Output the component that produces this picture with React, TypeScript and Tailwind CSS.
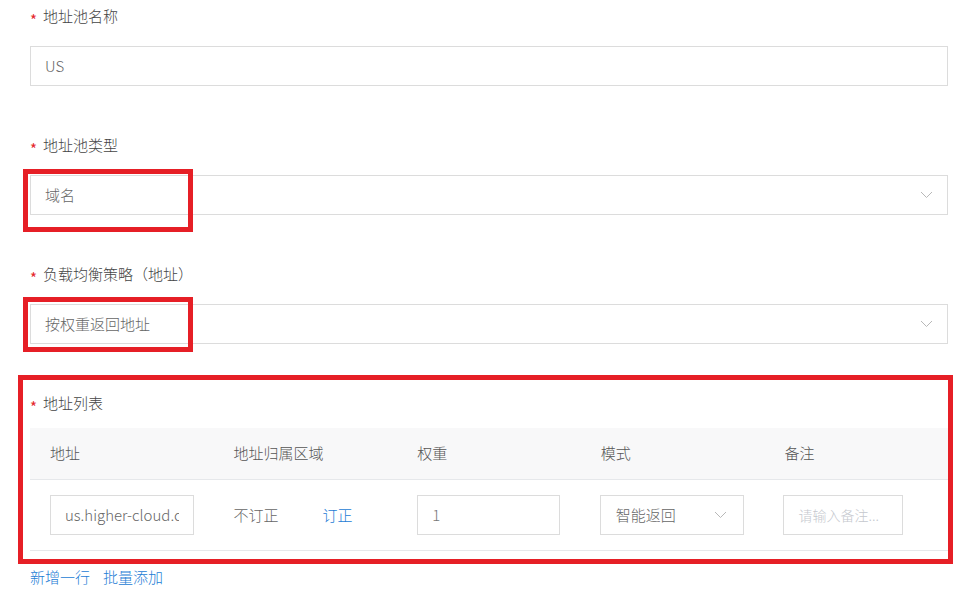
import React from "react"

const font = { fontFamily: '"Microsoft YaHei", "Noto Sans CJK SC", sans-serif' }

function Chevron({ className = "" }: { className?: string }) {
  return (
    <svg width="13" height="8" viewBox="0 0 13 8" className={className}>
      <path d="M1 1l5.5 5.5L12 1" fill="none" stroke="#b8b8b8" strokeWidth="1" />
    </svg>
  )
}

function Label({ children }: { children: React.ReactNode }) {
  return (
    <div className="flex h-5 items-center text-[15px] font-light leading-5 text-[#444]">
      <span className="mr-[6px] mt-[7px] text-[15px] font-normal leading-none text-[#e4262b]">*</span>
      {children}
    </div>
  )
}

function Field({ label, value, select }: { label: string; value: string; select?: boolean }) {
  return (
    <div className="flex flex-col">
      <Label>{label}</Label>
      <div className="mt-5 flex h-10 items-center justify-between border border-[#dcdcdc] bg-white pl-[14px] pr-[14px] text-[15px] font-light text-[#666]">
        <span>{value}</span>
        {select && <Chevron />}
      </div>
    </div>
  )
}

export default function App() {
  const cols = ["地址", "地址归属区域", "权重", "模式", "备注"]
  return (
    <div className="relative h-[603px] w-[971px] overflow-hidden bg-white" style={font}>
      <div className="flex flex-col pl-[30px] pr-[23px] pt-[6px]">
        <Field label="地址池名称" value="US" />
        <div className="mt-[49px]">
          <Field label="地址池类型" value="域名" select />
        </div>
        <div className="mt-[49px]">
          <Field label="负载均衡策略（地址）" value="按权重返回地址" select />
        </div>
        <div className="mt-[49px]">
          <Label>地址列表</Label>
        </div>
        <div className="mt-[15px] grid h-[52px] grid-cols-5 items-center border-b border-[#e6e8eb] bg-[#f8f8f9] text-[15px] font-light text-[#555]">
          {cols.map((c) => (
            <div key={c} className="pl-5">
              {c}
            </div>
          ))}
        </div>
        <div className="grid h-[71px] grid-cols-5 items-center border-b border-[#e6e8eb] text-[15px] font-light text-[#666]">
          <div className="pl-5">
            <div className="flex h-10 w-[144px] items-center border border-[#dcdcdc] pl-[14px] pr-[14px] text-[#666]">
              <div className="overflow-hidden whitespace-nowrap">us.higher-cloud.com</div>
            </div>
          </div>
          <div className="flex items-center pl-5">
            <span>不订正</span>
            <span className="ml-[44px] text-[#1c7cd5]">订正</span>
          </div>
          <div className="pl-5">
            <div className="flex h-10 w-[143px] items-center border border-[#dcdcdc] pl-[14px] text-[#777]">1</div>
          </div>
          <div className="pl-[19px]">
            <div className="flex h-10 w-[144px] items-center justify-between border border-[#dcdcdc] pl-[15px] pr-[16px]">
              <span>智能返回</span>
              <Chevron />
            </div>
          </div>
          <div className="pl-[19px]">
            <div className="flex h-10 w-[120px] items-center border border-[#dcdcdc] pl-[14px] text-[14px] text-[#c5c8ce]">
              请输入备注...
            </div>
          </div>
        </div>
        <div className="mt-4 flex gap-[13px] text-[15px] font-light leading-5 text-[#1c7cd5]">
          <span>新增一行</span>
          <span>批量添加</span>
        </div>
      </div>

      <div className="pointer-events-none absolute left-[23px] top-[169px] h-[63px] w-[170px] border-[5px] border-[#e61f26]" />
      <div className="pointer-events-none absolute left-[23px] top-[297px] h-[55px] w-[170px] border-[5px] border-[#e61f26]" />
      <div className="pointer-events-none absolute left-[18px] top-[375px] h-[189px] w-[935px] border-[5px] border-[#e61f26]" />
    </div>
  )
}
